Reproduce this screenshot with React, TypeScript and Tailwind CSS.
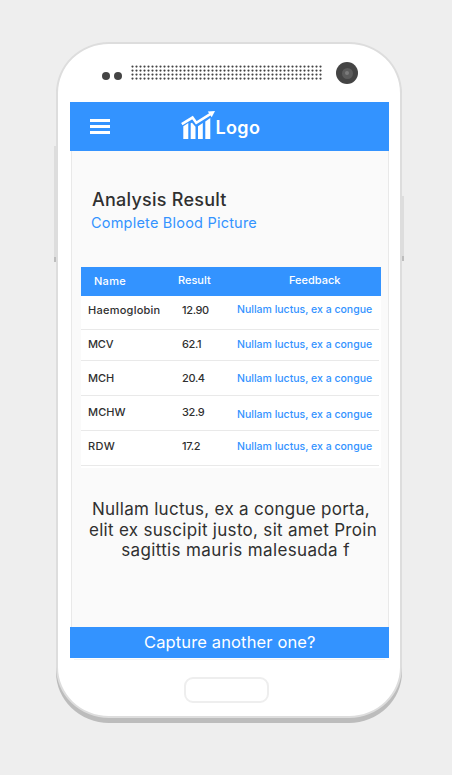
import React from "react";

const rows = [
  { name: "Haemoglobin", result: "12.90", row: "h-[34px]", pad: "pt-[7px]", feedPad: "pt-[7px]", track: "tracking-[0.25px]" },
  { name: "MCV", result: "62.1", row: "h-[31px]", pad: "pt-[7px]", feedPad: "pt-[8px]", track: "tracking-[-0.2px]" },
  { name: "MCH", result: "20.4", row: "h-[35px]", pad: "pt-[10px]", feedPad: "pt-[11px]", track: "tracking-[0px]" },
  { name: "MCHW", result: "32.9", row: "h-[35px]", pad: "pt-[9px]", feedPad: "pt-[12px]", track: "tracking-[0.1px]" },
  { name: "RDW", result: "17.2", row: "h-[35px]", pad: "pt-[8px]", feedPad: "pt-[9px]", track: "tracking-[0.4px]" },
];

function Speaker() {
  return (
    <svg width="192" height="16" className="absolute left-[73px] top-[21px]">
      <defs>
        <pattern id="dots" width="4" height="4" patternUnits="userSpaceOnUse">
          <circle cx="1.5" cy="1.6" r="1.1" fill="#444" />
        </pattern>
      </defs>
      <rect width="192" height="16" fill="url(#dots)" />
    </svg>
  );
}

function ChartLogo() {
  return (
    <svg width="34" height="28" viewBox="0 0 34 28" fill="white">
      <path d="M2.3 15.3 7.3 12v16h-5zM9.7 12.3l1.3-.6 3.5 4V28H9.7zM17 15.2l4.8-3.2v16H17zM24.3 10.4 29.3 7v21h-5z" />
      <path d="M.8 13.2 11.5 6.6l3.8 5.2L30 2.7" fill="none" stroke="white" strokeWidth="2.6" />
      <path d="M26.8.5 34 0l-3.3 6.3z" />
    </svg>
  );
}

export default function App() {
  return (
    <div className="flex h-[775px] w-[452px] justify-center overflow-hidden bg-[#eeeeee] pt-[42px] pl-[6px] font-['Inter',sans-serif] text-[#303030]">
      <div className="relative h-[676px] w-[346px] shrink-0 rounded-[53px/51px] border-2 border-[#dddddd] bg-white shadow-[0_5px_0_#bcbcbc]">
        <div className="absolute left-[-4px] top-[102px] h-[116px] w-[2px] border-b-[5px] border-[#bdbdbd] bg-[#dddddd]" />
        <div className="absolute right-[-4px] top-[152px] h-[65px] w-[2px] border-b-[5px] border-[#bdbdbd] bg-[#dddddd]" />
        <div className="absolute left-[44px] top-[27.5px] flex gap-[4px]">
          <span className="size-[8px] rounded-full bg-[#444]" />
          <span className="size-[8px] rounded-full bg-[#444]" />
        </div>
        <Speaker />
        <div className="absolute left-[278px] top-[18px] flex size-[22px] items-center justify-center rounded-full bg-[#444]">
          <span className="flex size-[11px] items-center justify-center rounded-full bg-[#5c5c5c]">
            <span className="size-[4px] rounded-full bg-[#7b7b7b]" />
          </span>
        </div>

        <div className="ml-[12px] mt-[58px] flex h-[556px] w-[319px] flex-col">
          <header className="flex h-[49px] shrink-0 bg-[#3393ff]">
            <div className="ml-[20px] mt-[17px] flex w-[20px] flex-col gap-[3px]">
              <span className="h-[3px] bg-white" />
              <span className="h-[3px] bg-white" />
              <span className="h-[3px] bg-white" />
            </div>
            <div className="ml-[71px] mt-[9px]">
              <ChartLogo />
            </div>
            <span className="ml-[0.5px] mt-[14px] whitespace-nowrap text-[18px] font-semibold leading-[24px] tracking-[0.35px] text-white">Logo</span>
          </header>

          <main className="ml-px flex flex-1 flex-col border-x border-[#e9e9e9] bg-[#fafafa]">
            <h1 className="ml-[20px] mt-[37px] whitespace-nowrap text-[18px] font-medium leading-[24px] tracking-[0.25px]">
              Analysis Result
            </h1>
            <p className="ml-[19px] mt-[1px] whitespace-nowrap text-[14.5px] leading-[20px] tracking-[0.21px] text-[#3393ff]">
              Complete Blood Picture
            </p>

            <div className="ml-[9px] mt-[34px] w-[300px] text-[11px] font-medium leading-[14px]">
              <div className="flex h-[29px] bg-[#3393ff] text-white">
                <span className="w-[84px] pl-[13px] pt-[7px] tracking-[0.3px]">Name</span>
                <span className="w-[111px] pl-[13px] pt-[6px]">Result</span>
                <span className="pl-[13px] pt-[6px]">Feedback</span>
              </div>
              <div className="bg-white pb-[2px]">
                {rows.map((r) => (
                  <div key={r.name} className={`flex w-[298px] whitespace-nowrap border-b border-[#e9e9e9] ${r.row}`}>
                    <span className={`w-[101px] pl-[7px] ${r.pad} ${r.track}`}>{r.name}</span>
                    <span className={`w-[55px] tracking-[-0.35px] ${r.pad}`}>{r.result}</span>
                    <span className={`text-[10.5px] text-[#3393ff] ${r.feedPad}`}>Nullam luctus, ex a congue</span>
                  </div>
                ))}
              </div>
            </div>

            <div className="mt-[31px] flex flex-col items-center whitespace-nowrap pl-[6px] text-[17px] leading-[20.5px]">
              <span className="-ml-[4px] tracking-[0.28px]">Nullam luctus, ex a congue porta,</span>
              <span className="tracking-[0.3px]">elit ex suscipit justo, sit amet Proin</span>
              <span className="ml-[5px] tracking-[0.37px]">sagittis mauris malesuada f</span>
            </div>
          </main>

          <footer className="flex h-[31px] shrink-0 items-center bg-[#3393ff] pl-[74px] text-[16.5px] tracking-[0.13px] text-white">
            <span className="whitespace-nowrap">Capture another one?</span>
          </footer>
        </div>
        <div className="ml-[16px] mt-[1px] h-px w-[311px] bg-[#f4f4f4]" />
        <div className="ml-[126px] mt-[17px] h-[26px] w-[85px] rounded-[9px] border-2 border-[#eeeeee] bg-white" />
      </div>
    </div>
  );
}
